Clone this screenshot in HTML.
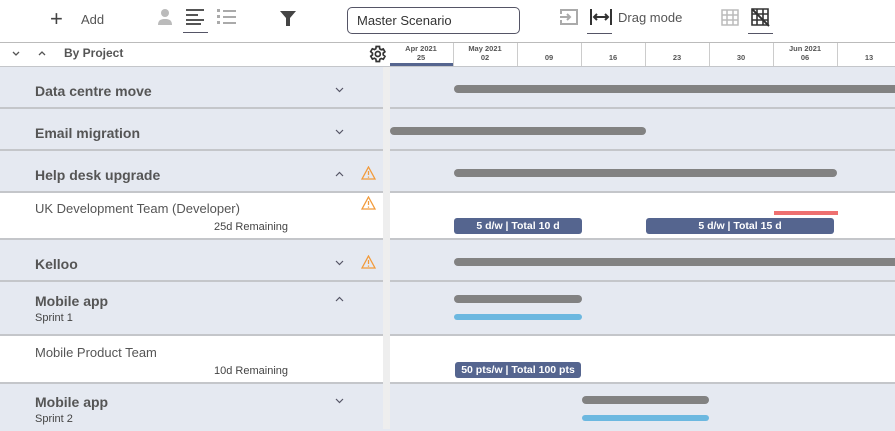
<!DOCTYPE html>
<html><head><meta charset="utf-8"><style>
*{box-sizing:border-box;margin:0;padding:0}
body{width:895px;height:429px;overflow:hidden;background:#fff;font-family:"Liberation Sans",Arial,sans-serif;position:relative;color:#555}
.a{position:absolute}
.row{position:absolute;left:0;width:895px;border-bottom:2px solid #c4c6ca}
.g{background:#e5e9f1}
.w{background:#fff}
.t{position:absolute;left:35px;font-size:14px;font-weight:bold;color:#555}
.s{position:absolute;left:35px;font-size:11px;color:#444}
.n{position:absolute;left:35px;font-size:13px;color:#555}
.rem{position:absolute;right:607px;font-size:11px;color:#444;text-align:right}
.bar{position:absolute;height:8px;border-radius:4px;background:#828282}
.lb{position:absolute;height:6px;border-radius:3px;background:#6cb8e0}
.pill{position:absolute;height:16px;border-radius:3px;background:#55658f;color:#fff;font-size:10.5px;font-weight:bold;text-align:center;line-height:16px}
.chev{position:absolute;left:335px;width:9px;height:6px}
.warn{position:absolute;left:361px;width:15px;height:14px}
.tk{position:absolute;top:43px;height:23px;border-left:1px solid #ccc}
.dl{position:absolute;top:44px;font-size:7.5px;font-weight:bold;color:#555;text-align:center;width:64px;line-height:9px}
</style></head><body>
<div class="a" style="left:50px;top:6px;font-size:22px;color:#444;font-weight:300">+</div>
<div class="a" style="left:81px;top:12px;font-size:13px;color:#555">Add</div>
<svg class="a" style="left:156px;top:8px" width="18" height="18" viewBox="0 0 18 18"><circle cx="9" cy="5" r="4" fill="#bbb"/><path d="M2 17c0-5 3-6 7-6s7 1 7 6z" fill="#bbb"/></svg>
<svg class="a" style="left:186px;top:9px" width="18" height="16"><rect y="0" width="18" height="2" fill="#555"/><rect y="5" width="12" height="2" fill="#555"/><rect y="10" width="18" height="2" fill="#555"/><rect y="14" width="15" height="2" fill="#555"/></svg>
<div class="a" style="left:183px;top:32px;width:25px;height:1px;background:#556"></div>
<svg class="a" style="left:217px;top:9px" width="19" height="16"><g fill="#aaa"><rect x="0" y="0" width="3" height="3"/><rect x="0" y="6" width="3" height="3"/><rect x="0" y="12" width="3" height="3"/><rect x="6" y="1" width="13" height="2"/><rect x="6" y="7" width="13" height="2"/><rect x="6" y="13" width="13" height="2"/></g></svg>
<svg class="a" style="left:280px;top:11px" width="16" height="15"><path d="M0 0h16l-6 7v8h-4v-8z" fill="#444"/></svg>
<div class="a" style="left:347px;top:7px;width:173px;height:27px;border:1px solid #556;border-radius:5px;font-size:13px;color:#333;padding:5px 9px">Master Scenario</div>
<svg class="a" style="left:560px;top:9px" width="18" height="16"><path d="M1 5V1h16v14H1v-4M0 8h10M7 5l3 3-3 3" stroke="#aaa" stroke-width="2" fill="none"/></svg>
<svg class="a" style="left:590px;top:9px" width="22" height="16"><path d="M1 0v16M21 0v16M4 8h14M7 5l-3 3 3 3M15 5l3 3-3 3" stroke="#333" stroke-width="2" fill="none"/></svg>
<div class="a" style="left:587px;top:33px;width:25px;height:1px;background:#556"></div>
<div class="a" style="left:618px;top:10px;font-size:13px;color:#555">Drag mode</div>
<svg class="a" style="left:721px;top:9px" width="18" height="17"><path d="M1 1h16v15H1zM6 1v15M12 1v15M1 6h16M1 11h16" stroke="#bbb" stroke-width="1.5" fill="none"/></svg>
<svg class="a" style="left:751px;top:8px" width="19" height="19"><path d="M1 1h16v16H1zM6 1v16M12 1v16M1 6h16M1 12h16" stroke="#333" stroke-width="1.6" fill="none"/><path d="M1 1l17 17" stroke="#333" stroke-width="2"/></svg>
<div class="a" style="left:748px;top:33px;width:25px;height:1px;background:#556"></div>
<div class="a" style="left:0;top:42px;width:895px;height:1px;background:#bbb"></div>
<svg class="a" style="left:12px;top:51px" width="8" height="5"><path d="M1 1l3 3 3-3" stroke="#555" stroke-width="1.3" fill="none"/></svg>
<svg class="a" style="left:38px;top:51px" width="8" height="5"><path d="M1 4l3-3 3 3" stroke="#555" stroke-width="1.3" fill="none"/></svg>
<div class="a" style="left:64px;top:46px;font-size:12px;font-weight:bold;color:#555">By Project</div>
<svg class="a" style="left:367px;top:44px" width="20" height="20" viewBox="0 0 24 24"><path d="M19.4 13a7.5 7.5 0 000-2l2.1-1.6-2-3.5-2.5 1a7 7 0 00-1.7-1L15 3h-4l-.4 2.7a7 7 0 00-1.7 1l-2.5-1-2 3.5L6.6 11a7.5 7.5 0 000 2l-2.1 1.6 2 3.5 2.5-1a7 7 0 001.7 1L11 21h4l.4-2.7a7 7 0 001.7-1l2.5 1 2-3.5z" fill="none" stroke="#333" stroke-width="2"/><circle cx="13" cy="12" r="3" fill="none" stroke="#333" stroke-width="2"/></svg>
<div class="a" style="left:390px;top:63px;width:63px;height:3px;background:#55658f"></div>
<div class="tk" style="left:453px"></div><div class="tk" style="left:517px"></div><div class="tk" style="left:581px"></div><div class="tk" style="left:645px"></div><div class="tk" style="left:709px"></div><div class="tk" style="left:773px"></div><div class="tk" style="left:837px"></div>
<div class="dl" style="left:389px">Apr 2021<br>25</div>
<div class="dl" style="left:453px">May 2021<br>02</div>
<div class="dl" style="left:517px"><br>09</div>
<div class="dl" style="left:581px"><br>16</div>
<div class="dl" style="left:645px"><br>23</div>
<div class="dl" style="left:709px"><br>30</div>
<div class="dl" style="left:773px">Jun 2021<br>06</div>
<div class="dl" style="left:837px"><br>13</div>
<div class="a" style="left:0;top:66px;width:895px;height:1px;background:#c4c6ca"></div>
<div class="row g" style="top:67px;height:42px"><div class="t" style="top:16px">Data centre move</div></div>
<div class="row g" style="top:109px;height:42px"><div class="t" style="top:16px">Email migration</div></div>
<div class="row g" style="top:151px;height:42px"><div class="t" style="top:16px">Help desk upgrade</div></div>
<div class="row w" style="top:193px;height:47px"><div class="n" style="top:8px">UK Development Team (Developer)</div><div class="rem" style="top:28px">25d Remaining</div></div>
<div class="row g" style="top:240px;height:42px"><div class="t" style="top:16px">Kelloo</div></div>
<div class="row g" style="top:282px;height:54px"><div class="t" style="top:11px">Mobile app</div><div class="s" style="top:30px">Sprint 1</div></div>
<div class="row w" style="top:336px;height:48px"><div class="n" style="top:9px">Mobile Product Team</div><div class="rem" style="top:29px">10d Remaining</div></div>
<div class="row g" style="top:384px;height:47px;border-bottom:none"><div class="t" style="top:10px">Mobile app</div><div class="s" style="top:29px">Sprint 2</div></div>
<div class="a" style="left:383px;top:67px;width:7px;height:362px;background:#eeeeee"></div>
<svg class="chev" style="top:87px"><path d="M1 1l3.5 3.5L8 1" stroke="#556" stroke-width="1.2" fill="none"/></svg>
<svg class="chev" style="top:129px"><path d="M1 1l3.5 3.5L8 1" stroke="#556" stroke-width="1.2" fill="none"/></svg>
<svg class="chev" style="top:171px"><path d="M1 5l3.5-3.5L8 5" stroke="#556" stroke-width="1.2" fill="none"/></svg>
<svg class="chev" style="top:260px"><path d="M1 1l3.5 3.5L8 1" stroke="#556" stroke-width="1.2" fill="none"/></svg>
<svg class="chev" style="top:296px"><path d="M1 5l3.5-3.5L8 5" stroke="#556" stroke-width="1.2" fill="none"/></svg>
<svg class="chev" style="top:398px"><path d="M1 1l3.5 3.5L8 1" stroke="#556" stroke-width="1.2" fill="none"/></svg>
<svg class="warn" style="top:166px" viewBox="0 0 15 14"><path d="M7.5 1L14 13H1z" fill="none" stroke="#f29a3a" stroke-width="1.3"/><path d="M7.5 5v4M7.5 10.5v1.3" stroke="#f29a3a" stroke-width="1.3"/></svg>
<svg class="warn" style="top:196px" viewBox="0 0 15 14"><path d="M7.5 1L14 13H1z" fill="none" stroke="#f29a3a" stroke-width="1.3"/><path d="M7.5 5v4M7.5 10.5v1.3" stroke="#f29a3a" stroke-width="1.3"/></svg>
<svg class="warn" style="top:255px" viewBox="0 0 15 14"><path d="M7.5 1L14 13H1z" fill="none" stroke="#f29a3a" stroke-width="1.3"/><path d="M7.5 5v4M7.5 10.5v1.3" stroke="#f29a3a" stroke-width="1.3"/></svg>
<div class="bar" style="left:454px;top:85px;width:450px"></div>
<div class="bar" style="left:390px;top:127px;width:256px"></div>
<div class="bar" style="left:454px;top:169px;width:383px"></div>
<div class="a" style="left:774px;top:211px;width:64px;height:4px;background:#ee7070"></div>
<div class="pill" style="left:454px;top:218px;width:128px">5 d/w | Total 10 d</div>
<div class="pill" style="left:646px;top:218px;width:188px">5 d/w | Total 15 d</div>
<div class="bar" style="left:454px;top:258px;width:450px"></div>
<div class="bar" style="left:454px;top:295px;width:128px"></div>
<div class="lb" style="left:454px;top:314px;width:128px"></div>
<div class="pill" style="left:455px;top:362px;width:126px">50 pts/w | Total 100 pts</div>
<div class="bar" style="left:582px;top:396px;width:127px"></div>
<div class="lb" style="left:582px;top:415px;width:127px"></div>
</body></html>
